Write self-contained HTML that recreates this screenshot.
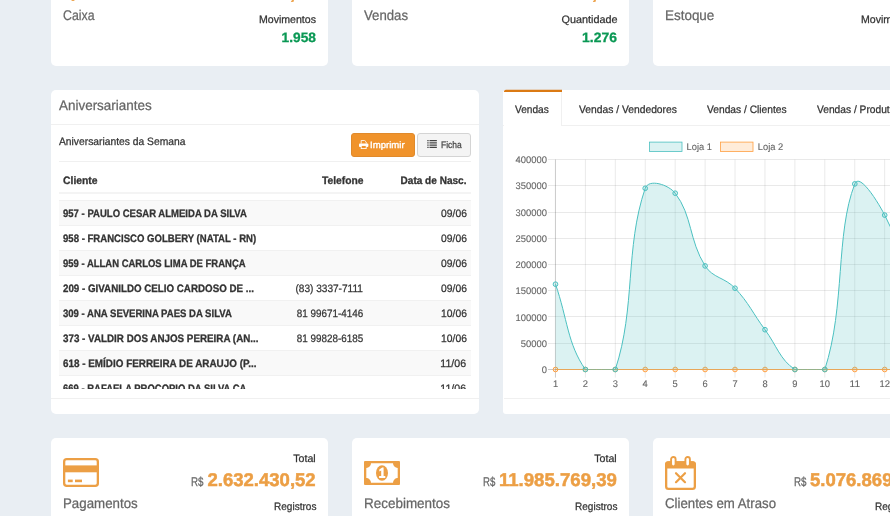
<!DOCTYPE html>
<html lang="pt-br"><head><meta charset="utf-8"><title>Dashboard</title>
<style>
html,body{margin:0;padding:0}
body{width:890px;height:516px;overflow:hidden;position:relative;background:#e9eef3;font-family:"Liberation Sans", sans-serif;}
#page{position:absolute;left:0;top:0;width:890px;height:516px;overflow:hidden;will-change:transform}
.card,.box{position:absolute;background:#fff;border-radius:5px}
.t{text-rendering:geometricPrecision;position:absolute;white-space:pre;line-height:1;display:block}
.ico{position:absolute;display:block}
.hl{position:absolute;height:1px;background:#f0f0f0}
.row{position:absolute;left:0;width:412px;height:24px;border-top:1px solid #f1f1f1}
.btn{position:absolute;border-radius:3px;box-sizing:border-box}
#tbl{position:absolute;left:59px;top:194.5px;width:412px;height:194.7px;overflow:hidden}
</style></head><body>
<div id="page">
<div class="card" style="left:51px;top:-50px;width:277.2px;height:116px"></div>
<div class="card" style="left:352px;top:-50px;width:277.2px;height:116px"></div>
<div class="card" style="left:653px;top:-50px;width:277.2px;height:116px"></div>

<div class="box" style="left:51px;top:90px;width:428px;height:323.5px"></div>
<div class="hl" style="left:51px;top:124px;width:428px"></div>
<div class="hl" style="left:59px;top:161px;width:412px"></div>
<div class="hl" style="left:59px;top:192px;width:412px;height:2px;background:#f4f4f4"></div>
<div class="hl" style="left:51px;top:398px;width:428px"></div>
<div class="btn" style="left:351px;top:133px;width:64px;height:24px;background:#f0932b;border:1px solid #e08a2c"></div>
<div class="btn" style="left:417px;top:133px;width:54px;height:24px;background:#f4f4f4;border:1px solid #d4d4d4"></div>
<svg class="ico" style="left:359.2px;top:140.1px" width="9.4" height="9.2" viewBox="0 0 9.4 9.2"><path d="M2.2 3.6V0.45H5.6L7.2 2V3.6" fill="none" stroke="#fff" stroke-width=".85"/><rect x="0" y="3.5" width="9.4" height="3.4" rx=".9" fill="#fff"/><rect x="2.2" y="5.5" width="5" height="3.1" fill="#f0932b" stroke="#fff" stroke-width=".85"/></svg>
<svg class="ico" style="left:427px;top:140px" width="10" height="8" viewBox="0 0 10 8"><path d="M0 0.05H1.9V1.3H0ZM0 2.25H1.9V3.5H0ZM0 4.45H1.9V5.7H0ZM0 6.65H1.9V7.9H0Z" fill="#777"/><path d="M2.5 0.05H9.85V1.3H2.5ZM2.5 2.25H9.85V3.5H2.5ZM2.5 4.45H9.85V5.7H2.5ZM2.5 6.65H9.85V7.9H2.5Z" fill="#444"/></svg>
<div id="tbl"><div class="row" style="top:5.5px;background:#f9f9f9"></div><div class="row" style="top:30.5px;background:#fff"></div><div class="row" style="top:55.5px;background:#f9f9f9"></div><div class="row" style="top:80.5px;background:#fff"></div><div class="row" style="top:105.5px;background:#f9f9f9"></div><div class="row" style="top:130.5px;background:#fff"></div><div class="row" style="top:155.5px;background:#f9f9f9"></div><div class="row" style="top:180.5px;background:#fff"></div>
<span class="t" style="left:4.20px;top:14.60px;font-size:10.76px;color:#333;transform:scaleX(0.8869);transform-origin:left center;font-weight:700;-webkit-text-stroke:0.3px;">957 - PAULO CESAR ALMEIDA DA SILVA</span>
<span class="t" style="left:380.69px;top:14.60px;font-size:10.76px;color:#333;transform:scaleX(0.9589);transform-origin:right center;-webkit-text-stroke:0.25px;">09/06</span>
<span class="t" style="left:4.20px;top:39.60px;font-size:10.76px;color:#333;transform:scaleX(0.8911);transform-origin:left center;font-weight:700;-webkit-text-stroke:0.3px;">958 - FRANCISCO GOLBERY (NATAL - RN)</span>
<span class="t" style="left:380.69px;top:39.60px;font-size:10.76px;color:#333;transform:scaleX(0.9589);transform-origin:right center;-webkit-text-stroke:0.25px;">09/06</span>
<span class="t" style="left:4.20px;top:64.60px;font-size:10.76px;color:#333;transform:scaleX(0.8819);transform-origin:left center;font-weight:700;-webkit-text-stroke:0.3px;">959 - ALLAN CARLOS LIMA DE FRANÇA</span>
<span class="t" style="left:380.69px;top:64.60px;font-size:10.76px;color:#333;transform:scaleX(0.9589);transform-origin:right center;-webkit-text-stroke:0.25px;">09/06</span>
<span class="t" style="left:4.20px;top:89.60px;font-size:10.76px;color:#333;transform:scaleX(0.9088);transform-origin:left center;font-weight:700;-webkit-text-stroke:0.3px;">209 - GIVANILDO CELIO CARDOSO DE ...</span>
<span class="t" style="left:232.38px;top:89.60px;font-size:10.76px;color:#333;transform:scaleX(0.9385);transform-origin:right center;-webkit-text-stroke:0.25px;">(83) 3337-7111</span>
<span class="t" style="left:380.69px;top:89.60px;font-size:10.76px;color:#333;transform:scaleX(0.9589);transform-origin:right center;-webkit-text-stroke:0.25px;">09/06</span>
<span class="t" style="left:4.20px;top:114.60px;font-size:10.76px;color:#333;transform:scaleX(0.8877);transform-origin:left center;font-weight:700;-webkit-text-stroke:0.3px;">309 - ANA SEVERINA PAES DA SILVA</span>
<span class="t" style="left:231.96px;top:114.60px;font-size:10.76px;color:#333;transform:scaleX(0.9192);transform-origin:right center;-webkit-text-stroke:0.25px;">81 99671-4146</span>
<span class="t" style="left:380.69px;top:114.60px;font-size:10.76px;color:#333;transform:scaleX(0.9589);transform-origin:right center;-webkit-text-stroke:0.25px;">10/06</span>
<span class="t" style="left:4.20px;top:139.60px;font-size:10.76px;color:#333;transform:scaleX(0.9134);transform-origin:left center;font-weight:700;-webkit-text-stroke:0.3px;">373 - VALDIR DOS ANJOS PEREIRA (AN...</span>
<span class="t" style="left:231.96px;top:139.60px;font-size:10.76px;color:#333;transform:scaleX(0.9192);transform-origin:right center;-webkit-text-stroke:0.25px;">81 99828-6185</span>
<span class="t" style="left:380.69px;top:139.60px;font-size:10.76px;color:#333;transform:scaleX(0.9589);transform-origin:right center;-webkit-text-stroke:0.25px;">10/06</span>
<span class="t" style="left:4.20px;top:164.60px;font-size:10.76px;color:#333;transform:scaleX(0.9194);transform-origin:left center;font-weight:700;-webkit-text-stroke:0.3px;">618 - EMÍDIO FERREIRA DE ARAUJO (P...</span>
<span class="t" style="left:381.49px;top:164.60px;font-size:10.76px;color:#333;transform:scaleX(0.9882);transform-origin:right center;-webkit-text-stroke:0.25px;">11/06</span>
<span class="t" style="left:4.20px;top:189.60px;font-size:10.76px;color:#333;transform:scaleX(0.8815);transform-origin:left center;font-weight:700;-webkit-text-stroke:0.3px;">669 - RAFAELA PROCOPIO DA SILVA CA</span>
<span class="t" style="left:381.49px;top:189.60px;font-size:10.76px;color:#333;transform:scaleX(0.9882);transform-origin:right center;-webkit-text-stroke:0.25px;">11/06</span>
</div>

<div class="box" style="left:503px;top:90px;width:420px;height:323.5px;border-radius:3px"></div>
<div class="hl" style="left:503px;top:125px;width:387px"></div>
<div style="position:absolute;left:504px;top:91px;width:58px;height:35px;background:#fff;border-right:1px solid #f0f0f0;box-sizing:border-box"></div>
<svg class="ico" style="left:503px;top:89px" width="60" height="4" viewBox="0 0 60 4"><path d="M1 2.9V2.6A1.9 1.9 0 0 1 2.9 0.8H59V2.9Z" fill="#db7a14"/></svg>
<div class="hl" style="left:504px;top:398px;width:386px"></div>
<svg class="chart" width="890" height="516" viewBox="0 0 890 516" style="position:absolute;left:0;top:0" font-family="Liberation Sans, Arial, sans-serif" font-size="9.6" fill="#666" stroke="#666" stroke-width="0.12" text-rendering="geometricPrecision">
<path d="M548 369.5H890" stroke="rgba(0,0,0,0.25)" stroke-width="0.85"/>
<path d="M548 343.5H890" stroke="rgba(0,0,0,0.1)" stroke-width="0.85"/>
<path d="M548 316.5H890" stroke="rgba(0,0,0,0.1)" stroke-width="0.85"/>
<path d="M548 290.5H890" stroke="rgba(0,0,0,0.1)" stroke-width="0.85"/>
<path d="M548 264.5H890" stroke="rgba(0,0,0,0.1)" stroke-width="0.85"/>
<path d="M548 238.5H890" stroke="rgba(0,0,0,0.1)" stroke-width="0.85"/>
<path d="M548 212.5H890" stroke="rgba(0,0,0,0.1)" stroke-width="0.85"/>
<path d="M548 185.5H890" stroke="rgba(0,0,0,0.1)" stroke-width="0.85"/>
<path d="M548 159.5H890" stroke="rgba(0,0,0,0.1)" stroke-width="0.85"/>
<path d="M555.45 159.5V377.6" stroke="rgba(0,0,0,0.25)" stroke-width="0.85"/>
<path d="M585.38 159.5V377.6" stroke="rgba(0,0,0,0.1)" stroke-width="0.85"/>
<path d="M615.31 159.5V377.6" stroke="rgba(0,0,0,0.1)" stroke-width="0.85"/>
<path d="M645.24 159.5V377.6" stroke="rgba(0,0,0,0.1)" stroke-width="0.85"/>
<path d="M675.17 159.5V377.6" stroke="rgba(0,0,0,0.1)" stroke-width="0.85"/>
<path d="M705.1 159.5V377.6" stroke="rgba(0,0,0,0.1)" stroke-width="0.85"/>
<path d="M735.03 159.5V377.6" stroke="rgba(0,0,0,0.1)" stroke-width="0.85"/>
<path d="M764.96 159.5V377.6" stroke="rgba(0,0,0,0.1)" stroke-width="0.85"/>
<path d="M794.89 159.5V377.6" stroke="rgba(0,0,0,0.1)" stroke-width="0.85"/>
<path d="M824.82 159.5V377.6" stroke="rgba(0,0,0,0.1)" stroke-width="0.85"/>
<path d="M854.75 159.5V377.6" stroke="rgba(0,0,0,0.1)" stroke-width="0.85"/>
<path d="M884.68 159.5V377.6" stroke="rgba(0,0,0,0.1)" stroke-width="0.85"/>
<text x="547" y="373.1" text-anchor="end" textLength="5.2" lengthAdjust="spacingAndGlyphs">0</text>
<text x="547" y="346.9" text-anchor="end" textLength="26.2" lengthAdjust="spacingAndGlyphs">50000</text>
<text x="547" y="320.6" text-anchor="end" textLength="31.4" lengthAdjust="spacingAndGlyphs">100000</text>
<text x="547" y="294.4" text-anchor="end" textLength="31.4" lengthAdjust="spacingAndGlyphs">150000</text>
<text x="547" y="268.1" text-anchor="end" textLength="31.4" lengthAdjust="spacingAndGlyphs">200000</text>
<text x="547" y="241.8" text-anchor="end" textLength="31.4" lengthAdjust="spacingAndGlyphs">250000</text>
<text x="547" y="215.6" text-anchor="end" textLength="31.4" lengthAdjust="spacingAndGlyphs">300000</text>
<text x="547" y="189.3" text-anchor="end" textLength="31.4" lengthAdjust="spacingAndGlyphs">350000</text>
<text x="547" y="163.1" text-anchor="end" textLength="31.4" lengthAdjust="spacingAndGlyphs">400000</text>
<text x="555.5" y="386.8" text-anchor="middle" textLength="5.2" lengthAdjust="spacingAndGlyphs">1</text>
<text x="585.4" y="386.8" text-anchor="middle" textLength="5.2" lengthAdjust="spacingAndGlyphs">2</text>
<text x="615.3" y="386.8" text-anchor="middle" textLength="5.2" lengthAdjust="spacingAndGlyphs">3</text>
<text x="645.2" y="386.8" text-anchor="middle" textLength="5.2" lengthAdjust="spacingAndGlyphs">4</text>
<text x="675.2" y="386.8" text-anchor="middle" textLength="5.2" lengthAdjust="spacingAndGlyphs">5</text>
<text x="705.1" y="386.8" text-anchor="middle" textLength="5.2" lengthAdjust="spacingAndGlyphs">6</text>
<text x="735.0" y="386.8" text-anchor="middle" textLength="5.2" lengthAdjust="spacingAndGlyphs">7</text>
<text x="765.0" y="386.8" text-anchor="middle" textLength="5.2" lengthAdjust="spacingAndGlyphs">8</text>
<text x="794.9" y="386.8" text-anchor="middle" textLength="5.2" lengthAdjust="spacingAndGlyphs">9</text>
<text x="824.8" y="386.8" text-anchor="middle" textLength="10.5" lengthAdjust="spacingAndGlyphs">10</text>
<text x="854.8" y="386.8" text-anchor="middle" textLength="10.5" lengthAdjust="spacingAndGlyphs">11</text>
<text x="884.7" y="386.8" text-anchor="middle" textLength="10.5" lengthAdjust="spacingAndGlyphs">12</text>
<rect x="649.6" y="142.1" width="32.4" height="9.3" fill="rgba(75,192,192,0.2)" stroke="rgb(75,192,192)" stroke-width="0.8"/>
<text x="686.6" y="149.8" textLength="25.3" lengthAdjust="spacingAndGlyphs">Loja 1</text>
<rect x="720.6" y="142.1" width="32.4" height="9.3" fill="rgba(255,159,64,0.2)" stroke="rgb(255,159,64)" stroke-width="0.8"/>
<text x="757.8" y="149.8" textLength="25.3" lengthAdjust="spacingAndGlyphs">Loja 2</text>
<path d="M555.45 369.5H890" stroke="rgb(255,159,64)" stroke-width="0.9" fill="none"/>
<circle cx="555.5" cy="369.5" r="2.35" fill="rgba(255,159,64,0.2)" stroke="rgb(255,159,64)" stroke-width="1"/>
<circle cx="585.4" cy="369.5" r="2.35" fill="rgba(255,159,64,0.2)" stroke="rgb(255,159,64)" stroke-width="1"/>
<circle cx="615.3" cy="369.5" r="2.35" fill="rgba(255,159,64,0.2)" stroke="rgb(255,159,64)" stroke-width="1"/>
<circle cx="645.2" cy="369.5" r="2.35" fill="rgba(255,159,64,0.2)" stroke="rgb(255,159,64)" stroke-width="1"/>
<circle cx="675.2" cy="369.5" r="2.35" fill="rgba(255,159,64,0.2)" stroke="rgb(255,159,64)" stroke-width="1"/>
<circle cx="705.1" cy="369.5" r="2.35" fill="rgba(255,159,64,0.2)" stroke="rgb(255,159,64)" stroke-width="1"/>
<circle cx="735.0" cy="369.5" r="2.35" fill="rgba(255,159,64,0.2)" stroke="rgb(255,159,64)" stroke-width="1"/>
<circle cx="765.0" cy="369.5" r="2.35" fill="rgba(255,159,64,0.2)" stroke="rgb(255,159,64)" stroke-width="1"/>
<circle cx="794.9" cy="369.5" r="2.35" fill="rgba(255,159,64,0.2)" stroke="rgb(255,159,64)" stroke-width="1"/>
<circle cx="824.8" cy="369.5" r="2.35" fill="rgba(255,159,64,0.2)" stroke="rgb(255,159,64)" stroke-width="1"/>
<circle cx="854.8" cy="369.5" r="2.35" fill="rgba(255,159,64,0.2)" stroke="rgb(255,159,64)" stroke-width="1"/>
<circle cx="884.7" cy="369.5" r="2.35" fill="rgba(255,159,64,0.2)" stroke="rgb(255,159,64)" stroke-width="1"/>
<path d="M555.5,284.2 C567.4,318.3 567.4,343.9 585.4,369.5 C591.3,369.5 612.0,369.5 615.3,369.5 C635.9,307.2 624.7,248.8 645.2,188.3 C648.6,178.3 668.5,184.6 675.2,193.2 C692.4,215.6 688.9,240.1 705.1,265.9 C712.8,278.1 724.9,277.4 735.0,288.2 C748.9,303.0 752.8,313.2 765.0,329.7 C776.8,345.7 779.9,359.6 794.9,369.5 C803.9,369.5 821.5,369.5 824.8,369.5 C845.5,305.5 835.3,234.1 854.8,183.9 C859.2,172.4 876.9,200.0 884.7,215.1 C900.9,246.5 902.6,266.0 914.6,300.0 L914.6,369.5 L555.5,369.5 Z" fill="rgba(75,192,192,0.2)" stroke="none"/>
<path d="M555.5,284.2 C567.4,318.3 567.4,343.9 585.4,369.5 C591.3,369.5 612.0,369.5 615.3,369.5 C635.9,307.2 624.7,248.8 645.2,188.3 C648.6,178.3 668.5,184.6 675.2,193.2 C692.4,215.6 688.9,240.1 705.1,265.9 C712.8,278.1 724.9,277.4 735.0,288.2 C748.9,303.0 752.8,313.2 765.0,329.7 C776.8,345.7 779.9,359.6 794.9,369.5 C803.9,369.5 821.5,369.5 824.8,369.5 C845.5,305.5 835.3,234.1 854.8,183.9 C859.2,172.4 876.9,200.0 884.7,215.1 C900.9,246.5 902.6,266.0 914.6,300.0" fill="none" stroke="rgb(75,192,192)" stroke-width="1"/>
<path d="M585.4 369.5H615.3M794.9 369.5H824.8" stroke="rgb(255,159,64)" stroke-opacity="0.45" stroke-width="0.9" fill="none"/>
<circle cx="555.5" cy="284.2" r="2.35" fill="rgba(75,192,192,0.2)" stroke="rgb(75,192,192)" stroke-width="1"/>
<circle cx="585.4" cy="369.5" r="2.35" fill="rgba(75,192,192,0.2)" stroke="rgb(75,192,192)" stroke-width="1"/>
<circle cx="615.3" cy="369.5" r="2.35" fill="rgba(75,192,192,0.2)" stroke="rgb(75,192,192)" stroke-width="1"/>
<circle cx="645.2" cy="188.3" r="2.35" fill="rgba(75,192,192,0.2)" stroke="rgb(75,192,192)" stroke-width="1"/>
<circle cx="675.2" cy="193.2" r="2.35" fill="rgba(75,192,192,0.2)" stroke="rgb(75,192,192)" stroke-width="1"/>
<circle cx="705.1" cy="265.9" r="2.35" fill="rgba(75,192,192,0.2)" stroke="rgb(75,192,192)" stroke-width="1"/>
<circle cx="735.0" cy="288.2" r="2.35" fill="rgba(75,192,192,0.2)" stroke="rgb(75,192,192)" stroke-width="1"/>
<circle cx="765.0" cy="329.7" r="2.35" fill="rgba(75,192,192,0.2)" stroke="rgb(75,192,192)" stroke-width="1"/>
<circle cx="794.9" cy="369.5" r="2.35" fill="rgba(75,192,192,0.2)" stroke="rgb(75,192,192)" stroke-width="1"/>
<circle cx="824.8" cy="369.5" r="2.35" fill="rgba(75,192,192,0.2)" stroke="rgb(75,192,192)" stroke-width="1"/>
<circle cx="854.8" cy="183.9" r="2.35" fill="rgba(75,192,192,0.2)" stroke="rgb(75,192,192)" stroke-width="1"/>
<circle cx="884.7" cy="215.1" r="2.35" fill="rgba(75,192,192,0.2)" stroke="rgb(75,192,192)" stroke-width="1"/>
</svg>

<div class="card" style="left:51px;top:437.5px;width:277.2px;height:116px"></div>
<div class="card" style="left:352px;top:437.5px;width:277.2px;height:116px"></div>
<div class="card" style="left:653px;top:437.5px;width:277.2px;height:116px"></div>
<svg class="ico" style="left:63px;top:458.1px" width="36" height="29" viewBox="0 0 36 29"><rect x="1.15" y="1.15" width="33.7" height="26.7" rx="2.6" fill="none" stroke="#ec9f45" stroke-width="2.3"/><rect x="1" y="7.4" width="34" height="6.9" fill="#ec9f45"/><rect x="4.9" y="21.6" width="4.8" height="2.6" fill="#ec9f45"/><rect x="12" y="21.6" width="7" height="2.6" fill="#ec9f45"/></svg>
<svg class="ico" style="left:364px;top:461px" width="36" height="24" viewBox="0 0 36 24"><path fill-rule="evenodd" fill="#ec9f45" d="M1 0H35a1 1 0 0 1 1 1V23a1 1 0 0 1-1 1H1a1 1 0 0 1-1-1V1a1 1 0 0 1 1-1ZM7 2.3A4.7 4.7 0 0 1 2.3 7V17A4.7 4.7 0 0 1 7 21.7H29A4.7 4.7 0 0 1 33.7 17V7A4.7 4.7 0 0 1 29 2.3Z"/><ellipse cx="18" cy="12" rx="6" ry="7.8" fill="#ec9f45"/><path d="M15.3 8.6 L18.2 6.6H19.6V15H21.3V16.9H15.1V15H17.2V9.6L15.3 10.6Z" fill="#fff"/></svg>
<svg class="ico" style="left:665px;top:455.8px" width="31" height="34" viewBox="0 0 31 34"><rect x="1.15" y="6.4" width="28.7" height="26.4" rx="2.4" fill="none" stroke="#ec9f45" stroke-width="2.3"/><path d="M0 12.4V8.6A3.4 3.4 0 0 1 3.4 5.2H27.6A3.4 3.4 0 0 1 31 8.6V12.4Z" fill="#ec9f45"/><rect x="6.1" y="0.95" width="4.5" height="9.4" rx="2.25" fill="#fff" stroke="#ec9f45" stroke-width="1.9"/><rect x="20.4" y="0.95" width="4.5" height="9.4" rx="2.25" fill="#fff" stroke="#ec9f45" stroke-width="1.9"/><path d="M11 17.2L20 26.2M20 17.2L11 26.2" stroke="#ec9f45" stroke-width="2.2" stroke-linecap="round"/></svg>
<div style="position:absolute;left:71px;top:-2px;width:4px;height:3.2px;background:#ec9f45;border-radius:0 0 2px 2px"></div>
<section class="grp" aria-label="Resumo: Caixa, Vendas, Estoque">
<span class="t" style="left:63.40px;top:8.10px;font-size:14.01px;color:#666;transform:scaleX(0.8800);transform-origin:left center;-webkit-text-stroke:0.25px;">Caixa</span>
<span class="t" style="left:258.05px;top:15.10px;font-size:10.76px;color:#333;transform:scaleX(0.9836);transform-origin:right center;-webkit-text-stroke:0.25px;">Movimentos</span>
<span class="t" style="left:282.09px;top:31.10px;font-size:13.55px;color:#0a9854;transform:scaleX(1.0116);transform-origin:right center;font-weight:700;-webkit-text-stroke:0.3px;">1.958</span>
<span class="t" style="left:364.00px;top:8.10px;font-size:14.01px;color:#666;transform:scaleX(0.9418);transform-origin:left center;-webkit-text-stroke:0.25px;">Vendas</span>
<span class="t" style="left:561.71px;top:15.10px;font-size:10.76px;color:#333;transform:scaleX(1.0073);transform-origin:right center;-webkit-text-stroke:0.25px;">Quantidade</span>
<span class="t" style="left:583.39px;top:31.10px;font-size:13.55px;color:#0a9854;transform:scaleX(1.0264);transform-origin:right center;font-weight:700;-webkit-text-stroke:0.3px;">1.276</span>
<span class="t" style="left:664.60px;top:8.10px;font-size:14.01px;color:#666;transform:scaleX(0.9596);transform-origin:left center;-webkit-text-stroke:0.25px;">Estoque</span>
<span class="t" style="left:861.00px;top:15.10px;font-size:10.76px;color:#333;transform:scaleX(0.9836);transform-origin:left center;-webkit-text-stroke:0.25px;">Movimentos</span>
<span class="t" style="left:191.30px;top:-10.90px;font-size:12.72px;color:#666;transform:scaleX(0.7685);transform-origin:left center;-webkit-text-stroke:0.25px;">R$</span>
<span class="t" style="left:208.34px;top:-15.90px;font-size:18.44px;color:#ec9f45;transform:scaleX(1.0051);transform-origin:right center;font-weight:700;-webkit-text-stroke:0.5px;">1.417.530,52</span>
<span class="t" style="left:492.50px;top:-10.90px;font-size:12.72px;color:#666;transform:scaleX(0.7685);transform-origin:left center;-webkit-text-stroke:0.25px;">R$</span>
<span class="t" style="left:509.64px;top:-15.90px;font-size:18.44px;color:#ec9f45;transform:scaleX(1.0051);transform-origin:right center;font-weight:700;-webkit-text-stroke:0.5px;">3.417.530,52</span>
<span class="t" style="left:793.70px;top:-10.90px;font-size:12.72px;color:#666;transform:scaleX(0.7685);transform-origin:left center;-webkit-text-stroke:0.25px;">R$</span>
<span class="t" style="left:810.50px;top:-15.90px;font-size:18.44px;color:#ec9f45;transform:scaleX(1.0051);transform-origin:left center;font-weight:700;-webkit-text-stroke:0.5px;">5.076.869,52</span>
</section>
<section class="grp" aria-label="Aniversariantes">
<span class="t" style="left:59.00px;top:99.10px;font-size:13.83px;color:#666;transform:scaleX(0.9726);transform-origin:left center;-webkit-text-stroke:0.25px;">Aniversariantes</span>
<span class="t" style="left:59.00px;top:137.10px;font-size:10.76px;color:#333;transform:scaleX(0.9571);transform-origin:left center;-webkit-text-stroke:0.25px;">Aniversariantes da Semana</span>
<span class="t" style="left:370.40px;top:141.10px;font-size:9.22px;color:#fff;transform:scaleX(1.0391);transform-origin:left center;-webkit-text-stroke:0.35px;">Imprimir</span>
<span class="t" style="left:440.80px;top:141.10px;font-size:9.59px;color:#444;transform:scaleX(0.8838);transform-origin:left center;-webkit-text-stroke:0.25px;">Ficha</span>
<span class="t" style="left:63.00px;top:176.10px;font-size:10.76px;color:#333;transform:scaleX(0.9653);transform-origin:left center;font-weight:700;-webkit-text-stroke:0.3px;">Cliente</span>
<span class="t" style="left:319.99px;top:176.10px;font-size:10.76px;color:#333;transform:scaleX(0.9561);transform-origin:right center;font-weight:700;-webkit-text-stroke:0.3px;">Telefone</span>
<span class="t" style="left:395.98px;top:176.10px;font-size:10.76px;color:#333;transform:scaleX(0.9360);transform-origin:right center;font-weight:700;-webkit-text-stroke:0.3px;">Data de Nasc.</span>
</section>
<section class="grp" aria-label="Abas do gráfico de vendas">
<span class="t" style="left:515.10px;top:105.10px;font-size:10.76px;color:#333;transform:scaleX(0.9422);transform-origin:left center;-webkit-text-stroke:0.25px;">Vendas</span>
<span class="t" style="left:579.10px;top:105.10px;font-size:10.76px;color:#333;transform:scaleX(0.9577);transform-origin:left center;-webkit-text-stroke:0.25px;">Vendas / Vendedores</span>
<span class="t" style="left:707.10px;top:105.10px;font-size:10.76px;color:#333;transform:scaleX(0.9513);transform-origin:left center;-webkit-text-stroke:0.25px;">Vendas / Clientes</span>
<span class="t" style="left:816.60px;top:105.10px;font-size:10.76px;color:#333;transform:scaleX(0.9504);transform-origin:left center;-webkit-text-stroke:0.25px;">Vendas / Produtos</span>
</section>
<section class="grp" aria-label="Resumo: Pagamentos, Recebimentos, Clientes em Atraso">
<span class="t" style="left:293.28px;top:454.10px;font-size:10.76px;color:#333;transform:scaleX(0.9904);transform-origin:right center;-webkit-text-stroke:0.25px;">Total</span>
<span class="t" style="left:191.30px;top:476.10px;font-size:12.72px;color:#666;transform:scaleX(0.7685);transform-origin:left center;-webkit-text-stroke:0.25px;">R$</span>
<span class="t" style="left:208.34px;top:471.10px;font-size:18.44px;color:#ec9f45;transform:scaleX(1.0051);transform-origin:right center;font-weight:700;-webkit-text-stroke:0.5px;">2.632.430,52</span>
<span class="t" style="left:62.50px;top:496.10px;font-size:14.01px;color:#666;transform:scaleX(0.9503);transform-origin:left center;-webkit-text-stroke:0.25px;">Pagamentos</span>
<span class="t" style="left:270.59px;top:502.10px;font-size:10.76px;color:#333;transform:scaleX(0.9338);transform-origin:right center;-webkit-text-stroke:0.25px;">Registros</span>
<span class="t" style="left:594.48px;top:454.10px;font-size:10.76px;color:#333;transform:scaleX(0.9904);transform-origin:right center;-webkit-text-stroke:0.25px;">Total</span>
<span class="t" style="left:482.60px;top:476.10px;font-size:12.72px;color:#666;transform:scaleX(0.7562);transform-origin:left center;-webkit-text-stroke:0.25px;">R$</span>
<span class="t" style="left:500.29px;top:471.10px;font-size:18.44px;color:#ec9f45;transform:scaleX(1.0094);transform-origin:right center;font-weight:700;-webkit-text-stroke:0.5px;">11.985.769,39</span>
<span class="t" style="left:363.50px;top:496.10px;font-size:14.01px;color:#666;transform:scaleX(0.9609);transform-origin:left center;-webkit-text-stroke:0.25px;">Recebimentos</span>
<span class="t" style="left:571.79px;top:502.10px;font-size:10.76px;color:#333;transform:scaleX(0.9338);transform-origin:right center;-webkit-text-stroke:0.25px;">Registros</span>
<span class="t" style="left:895.50px;top:454.10px;font-size:10.76px;color:#333;transform:scaleX(0.9904);transform-origin:left center;-webkit-text-stroke:0.25px;">Total</span>
<span class="t" style="left:793.70px;top:476.10px;font-size:12.72px;color:#666;transform:scaleX(0.7685);transform-origin:left center;-webkit-text-stroke:0.25px;">R$</span>
<span class="t" style="left:809.70px;top:471.10px;font-size:18.44px;color:#ec9f45;transform:scaleX(1.0051);transform-origin:left center;font-weight:700;-webkit-text-stroke:0.5px;">5.076.869,52</span>
<span class="t" style="left:665.20px;top:496.10px;font-size:14.01px;color:#666;transform:scaleX(0.9447);transform-origin:left center;-webkit-text-stroke:0.25px;">Clientes em Atraso</span>
<span class="t" style="left:875.40px;top:502.10px;font-size:10.76px;color:#333;transform:scaleX(0.9338);transform-origin:left center;-webkit-text-stroke:0.25px;">Registros</span>
</section>
</div>
</body></html>
